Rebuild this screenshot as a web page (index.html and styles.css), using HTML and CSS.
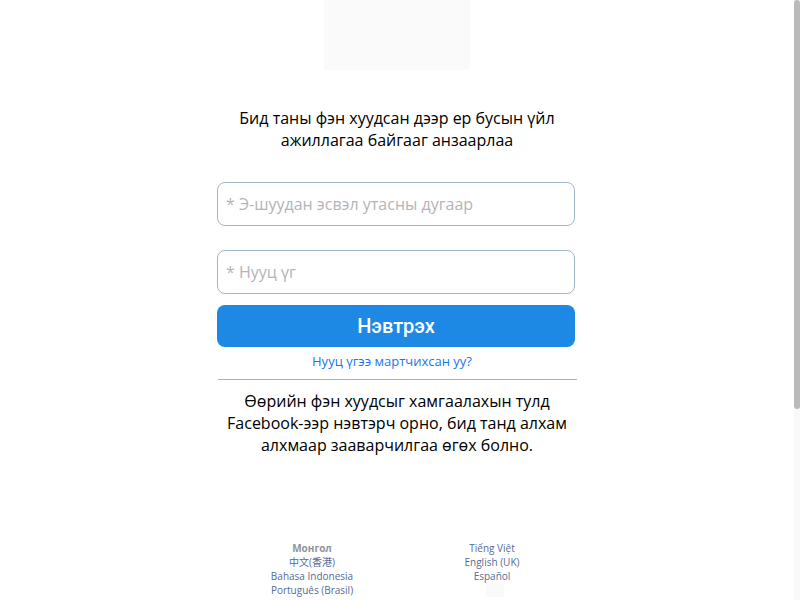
FILE: index.html
```html
<!DOCTYPE html>
<html lang="mn">
<head>
<meta charset="utf-8">
<title>Нэвтрэх</title>
<link rel="stylesheet" href="styles.css">
</head>
<body>
<main class="page">
  <div class="banner"></div>
  <p class="notice">Бид таны фэн хуудсан дээр ер бусын үйл ажиллагаа байгааг анзаарлаа</p>
  <form class="login">
    <input class="field" type="text" aria-label="Э-шуудан эсвэл утасны дугаар" placeholder="* Э-шуудан эсвэл утасны дугаар">
    <input class="field" type="password" aria-label="Нууц үг" placeholder="* Нууц үг">
    <button class="submit" type="submit">Нэвтрэх</button>
  </form>
  <a class="forgot" href="#">Нууц үгээ мартчихсан уу?</a>
  <hr class="rule">
  <p class="advice">Өөрийн фэн хуудсыг хамгаалахын тулд Facebook-ээр нэвтэрч орно, бид танд алхам алхмаар зааварчилгаа өгөх болно.</p>
  <footer class="languages">
    <div class="column">
      <strong class="current">Монгол</strong>
      <a href="#">中文(香港)</a>
      <a href="#">Bahasa Indonesia</a>
      <a href="#">Português (Brasil)</a>
    </div>
    <div class="column">
      <a href="#">Tiếng Việt</a>
      <a href="#">English (UK)</a>
      <a href="#">Español</a>
      <span class="more"></span>
    </div>
  </footer>
</main>
<div class="scrollbar"><div class="thumb"></div></div>
</body>
</html>
```

FILE: styles.css
```css
* {
  box-sizing: border-box;
}

body {
  margin: 0;
  background: #fff;
  color: #000;
  font: 16px/22px "Open Sans", "Noto Sans CJK TC", sans-serif;
}

.page {
  display: flex;
  flex-direction: column;
  align-items: center;
  width: 100%;
  max-width: 360px;
  margin: 0 auto;
  padding-right: 6px;
  box-sizing: content-box;
}

.banner {
  width: 146px;
  height: 70px;
  background: #fafafa;
}

.notice {
  width: 100%;
  margin: 37px 0 31px;
  padding: 0 16px;
  text-align: center;
}

.login {
  display: flex;
  flex-direction: column;
  width: 100%;
  padding-right: 2px;
}

.field {
  width: 100%;
  height: 44px;
  margin: 0 0 24px;
  padding: 0 8px;
  border: 1px solid #9fb6c3;
  border-radius: 8px;
  background: #fff;
  font: inherit;
}

.field + .field {
  margin-bottom: 11px;
}

.field::placeholder {
  color: #b4b4b8;
  opacity: 1;
}

.submit {
  height: 42px;
  padding: 0;
  border: 0;
  border-radius: 8px;
  background: #1e88e5;
  color: #fff;
  font: 500 20px/42px Roboto, sans-serif;
}

.forgot {
  margin-top: 5px;
  padding-right: 10px;
  color: #1877f2;
  font-size: 13px;
  line-height: 18px;
  text-decoration: none;
}

.rule {
  align-self: stretch;
  margin: 9px 0 10px 1px;
  border: 0;
  border-top: 1px solid #a3b4bb;
}

.advice {
  width: 100%;
  margin: 0;
  text-align: center;
}

.languages {
  display: flex;
  width: 100%;
  margin: 85px 0 0 10px;
}

.column {
  display: flex;
  flex: 1;
  flex-direction: column;
  align-items: center;
  font-size: 10px;
  line-height: 14px;
}

.column a {
  color: #576b95;
  text-decoration: none;
}

.current {
  color: #90949c;
}

.more {
  width: 18px;
  height: 14px;
  margin-left: 6px;
  background: #fafafa;
}

.scrollbar {
  position: fixed;
  top: 0;
  right: 0;
  bottom: 0;
  width: 6px;
  background: #f9f9f9;
}

.thumb {
  height: 68.2%;
  border-radius: 3px;
  background: #bababa;
}
```
